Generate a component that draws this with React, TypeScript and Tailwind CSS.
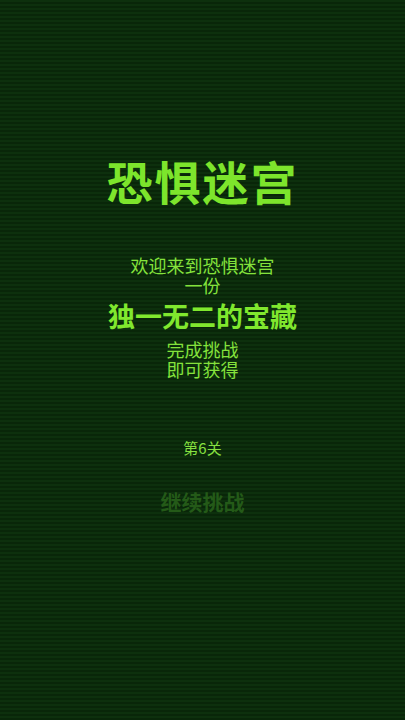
import React from 'react';

const font = { fontFamily: '"Noto Sans CJK SC", "Noto Sans", sans-serif' };

export default function App() {
  return (
    <div
      className="w-[405px] h-[720px] flex flex-col items-center bg-[#0b2a0b] bg-[repeating-linear-gradient(to_bottom,#0d300d_0px,#0d300d_2px,#092609_2px,#092609_4px)] text-[#80e82e]"
      style={font}
    >
      <h1 className="mt-[153px] text-[46px] leading-[54px] font-bold tracking-[2px] text-[#7de52c]">恐惧迷宫</h1>
      <div className="mt-[48px] flex flex-col items-center text-center">
        <p className="text-[18px] leading-[20px] text-[#84e23c]">
          欢迎来到恐惧迷宫
          <br />
          一份
        </p>
        <p className="mt-[6px] text-[27px] leading-[30px] font-bold text-[#80e82e]">独一无二的宝藏</p>
        <p className="mt-[8px] text-[18px] leading-[20px] text-[#84e23c]">
          完成挑战
          <br />
          即可获得
        </p>
      </div>
      <p className="mt-[60px] text-[15px] leading-[18px] text-[#86e040]">第6关</p>
      <p className="mt-[31px] text-[21px] leading-[26px] font-bold text-[#245a18]">继续挑战</p>
    </div>
  );
}
